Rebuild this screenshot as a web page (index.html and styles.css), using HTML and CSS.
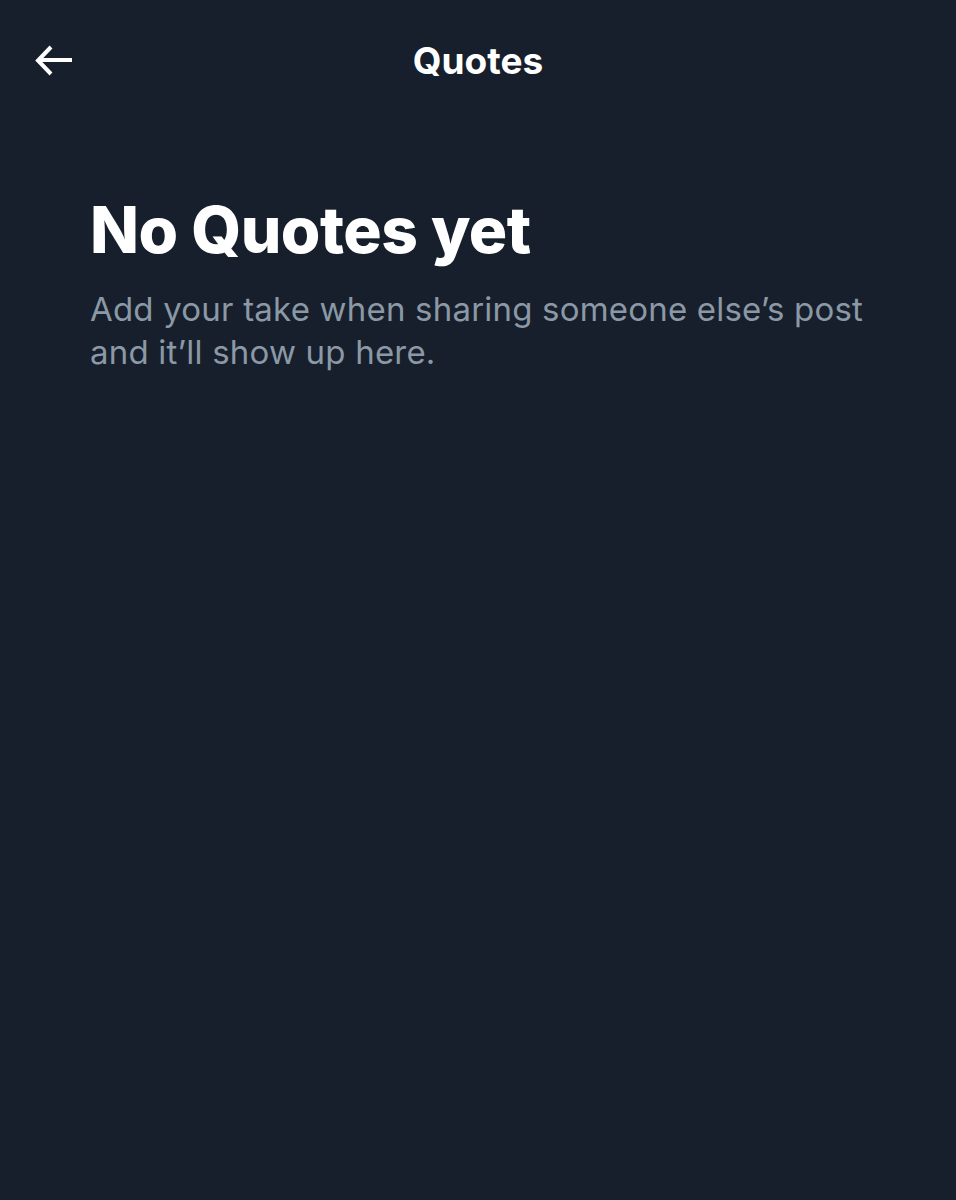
FILE: index.html
```html
<!DOCTYPE html>
<html lang="en">
<head>
<meta charset="utf-8">
<title>Quotes</title>
<link rel="stylesheet" href="styles.css">
</head>
<body>
<div class="screen">
  <header class="topbar">
    <button class="back" aria-label="Back">
      <svg width="40" height="34" viewBox="0 0 40 34" fill="none" stroke="#ffffff" stroke-width="4" stroke-linecap="butt" stroke-linejoin="miter">
        <path d="M38 17H5"/>
        <path d="M17 4L4 17.5L17 31"/>
      </svg>
    </button>
    <h1 class="title">Quotes</h1>
    <span class="spacer"></span>
  </header>
  <main class="empty">
    <h2 class="empty-title">No Quotes yet</h2>
    <p class="empty-text">Add your take when sharing someone else’s post and it’ll show up here.</p>
  </main>
</div>
</body>
</html>
```
FILE: styles.css
```css
html, body {
  margin: 0;
  padding: 0;
  background: #161f2b;
}
.screen {
  width: 956px;
  min-height: 1200px;
  background: #161f2b;
  font-family: Inter, "Noto Sans", "Liberation Sans", sans-serif;
  color: #ffffff;
}
.topbar {
  height: 124px;
  display: flex;
  align-items: center;
  padding: 0 0 4px 0;
  box-sizing: border-box;
}
.back {
  width: 108px;
  height: 60px;
  display: flex;
  align-items: center;
  padding: 0 0 0 34px;
  background: none;
  border: 0;
  box-sizing: border-box;
}
.title {
  flex: 1;
  margin: 0;
  text-align: center;
  font-size: 37px;
  font-weight: 700;
  letter-spacing: 0;
}
.spacer {
  width: 108px;
}
.empty {
  padding: 66px 90px 0 90px;
}
.empty-title {
  margin: 0;
  font-size: 64px;
  font-weight: 800;
  letter-spacing: -0.5px;
  line-height: 80px;
}
.empty-text {
  margin: 18px 0 0 0;
  font-size: 33px;
  line-height: 43px;
  letter-spacing: 0.2px;
  color: #8b98a5;
  max-width: 800px;
}
```
